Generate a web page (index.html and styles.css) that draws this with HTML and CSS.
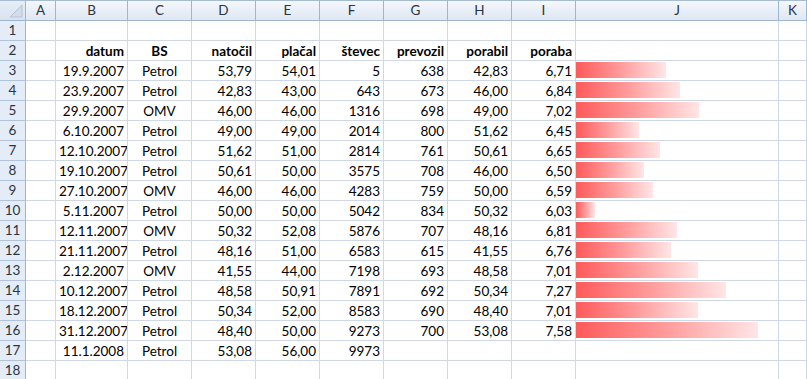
FILE: index.html
```html
<!DOCTYPE html>
<html>
<head>
<meta charset="utf-8">
<link rel="stylesheet" href="styles.css">
</head>
<body>
<div class="sheet">
  <div class="ch corner"><svg class="tri" width="14" height="14" viewBox="0 0 14 14"><polygon points="1,13 13,1 13,13" fill="#d3dde9" stroke="#b3c3d6" stroke-width="1"/></svg></div>
  <div class="ch">A</div><div class="ch">B</div><div class="ch">C</div><div class="ch">D</div><div class="ch">E</div><div class="ch">F</div><div class="ch">G</div><div class="ch">H</div><div class="ch">I</div><div class="ch">J</div><div class="ch">K</div>

  <div class="rh">1</div><div class="c"></div><div class="c"></div><div class="c"></div><div class="c"></div><div class="c"></div><div class="c"></div><div class="c"></div><div class="c"></div><div class="c"></div><div class="c"></div><div class="c"></div>

  <div class="rh">2</div><div class="c"></div><div class="c r b">datum</div><div class="c m b">BS</div><div class="c r b">natočil</div><div class="c r b">plačal</div><div class="c r b">števec</div><div class="c r b">prevozil</div><div class="c r b">porabil</div><div class="c r b">poraba</div><div class="c"></div><div class="c"></div>

  <div class="rh">3</div><div class="c"></div><div class="c r">19.9.2007</div><div class="c m">Petrol</div><div class="c r">53,79</div><div class="c r">54,01</div><div class="c r">5</div><div class="c r">638</div><div class="c r">42,83</div><div class="c r">6,71</div><div class="c bar"><span class="fill" style="width:90px"></span></div><div class="c"></div>

  <div class="rh">4</div><div class="c"></div><div class="c r">23.9.2007</div><div class="c m">Petrol</div><div class="c r">42,83</div><div class="c r">43,00</div><div class="c r">643</div><div class="c r">673</div><div class="c r">46,00</div><div class="c r">6,84</div><div class="c bar"><span class="fill" style="width:104px"></span></div><div class="c"></div>

  <div class="rh">5</div><div class="c"></div><div class="c r">29.9.2007</div><div class="c m">OMV</div><div class="c r">46,00</div><div class="c r">46,00</div><div class="c r">1316</div><div class="c r">698</div><div class="c r">49,00</div><div class="c r">7,02</div><div class="c bar"><span class="fill" style="width:123px"></span></div><div class="c"></div>

  <div class="rh">6</div><div class="c"></div><div class="c r">6.10.2007</div><div class="c m">Petrol</div><div class="c r">49,00</div><div class="c r">49,00</div><div class="c r">2014</div><div class="c r">800</div><div class="c r">51,62</div><div class="c r">6,45</div><div class="c bar"><span class="fill" style="width:63px"></span></div><div class="c"></div>

  <div class="rh">7</div><div class="c"></div><div class="c r">12.10.2007</div><div class="c m">Petrol</div><div class="c r">51,62</div><div class="c r">51,00</div><div class="c r">2814</div><div class="c r">761</div><div class="c r">50,61</div><div class="c r">6,65</div><div class="c bar"><span class="fill" style="width:84px"></span></div><div class="c"></div>

  <div class="rh">8</div><div class="c"></div><div class="c r">19.10.2007</div><div class="c m">Petrol</div><div class="c r">50,61</div><div class="c r">50,00</div><div class="c r">3575</div><div class="c r">708</div><div class="c r">46,00</div><div class="c r">6,50</div><div class="c bar"><span class="fill" style="width:68px"></span></div><div class="c"></div>

  <div class="rh">9</div><div class="c"></div><div class="c r">27.10.2007</div><div class="c m">OMV</div><div class="c r">46,00</div><div class="c r">46,00</div><div class="c r">4283</div><div class="c r">759</div><div class="c r">50,00</div><div class="c r">6,59</div><div class="c bar"><span class="fill" style="width:77px"></span></div><div class="c"></div>

  <div class="rh">10</div><div class="c"></div><div class="c r">5.11.2007</div><div class="c m">Petrol</div><div class="c r">50,00</div><div class="c r">50,00</div><div class="c r">5042</div><div class="c r">834</div><div class="c r">50,32</div><div class="c r">6,03</div><div class="c bar"><span class="fill" style="width:19px"></span></div><div class="c"></div>

  <div class="rh">11</div><div class="c"></div><div class="c r">12.11.2007</div><div class="c m">OMV</div><div class="c r">50,32</div><div class="c r">52,08</div><div class="c r">5876</div><div class="c r">707</div><div class="c r">48,16</div><div class="c r">6,81</div><div class="c bar"><span class="fill" style="width:101px"></span></div><div class="c"></div>

  <div class="rh">12</div><div class="c"></div><div class="c r">21.11.2007</div><div class="c m">Petrol</div><div class="c r">48,16</div><div class="c r">51,00</div><div class="c r">6583</div><div class="c r">615</div><div class="c r">41,55</div><div class="c r">6,76</div><div class="c bar"><span class="fill" style="width:95px"></span></div><div class="c"></div>

  <div class="rh">13</div><div class="c"></div><div class="c r">2.12.2007</div><div class="c m">OMV</div><div class="c r">41,55</div><div class="c r">44,00</div><div class="c r">7198</div><div class="c r">693</div><div class="c r">48,58</div><div class="c r">7,01</div><div class="c bar"><span class="fill" style="width:122px"></span></div><div class="c"></div>

  <div class="rh">14</div><div class="c"></div><div class="c r">10.12.2007</div><div class="c m">Petrol</div><div class="c r">48,58</div><div class="c r">50,91</div><div class="c r">7891</div><div class="c r">692</div><div class="c r">50,34</div><div class="c r">7,27</div><div class="c bar"><span class="fill" style="width:150px"></span></div><div class="c"></div>

  <div class="rh">15</div><div class="c"></div><div class="c r">18.12.2007</div><div class="c m">Petrol</div><div class="c r">50,34</div><div class="c r">52,00</div><div class="c r">8583</div><div class="c r">690</div><div class="c r">48,40</div><div class="c r">7,01</div><div class="c bar"><span class="fill" style="width:122px"></span></div><div class="c"></div>

  <div class="rh">16</div><div class="c"></div><div class="c r">31.12.2007</div><div class="c m">Petrol</div><div class="c r">48,40</div><div class="c r">50,00</div><div class="c r">9273</div><div class="c r">700</div><div class="c r">53,08</div><div class="c r">7,58</div><div class="c bar"><span class="fill" style="width:182px"></span></div><div class="c"></div>

  <div class="rh">17</div><div class="c"></div><div class="c r">11.1.2008</div><div class="c m">Petrol</div><div class="c r">53,08</div><div class="c r">56,00</div><div class="c r">9973</div><div class="c"></div><div class="c"></div><div class="c"></div><div class="c"></div><div class="c"></div>

  <div class="rh">18</div><div class="c"></div><div class="c"></div><div class="c"></div><div class="c"></div><div class="c"></div><div class="c"></div><div class="c"></div><div class="c"></div><div class="c"></div><div class="c"></div><div class="c"></div>
</div>
</body>
</html>
```
FILE: styles.css
```css
html, body {
  margin: 0;
  padding: 0;
  background: #ffffff;
}
body {
  font-family: Lato, "Noto Sans", sans-serif;
  font-size: 13.5px;
  color: #000;
  overflow: hidden;
}
.sheet {
  display: grid;
  grid-template-columns: 26px 30px 72px 64px 64px 64px 64px 64px 64px 64px 203px 1fr;
  grid-template-rows: 21px;
  grid-auto-rows: 20px;
  width: 807px;
}
.ch {
  box-sizing: border-box;
  border-top: 1px solid #a7bcd5;
  border-bottom: 1px solid #9eb6ce;
  border-right: 1px solid #9eb6ce;
  background: linear-gradient(to bottom, #f5f8fc 0%, #e9eff7 50%, #dfe7f1 100%);
  display: flex;
  align-items: center;
  justify-content: center;
  color: #2a3442;
  line-height: 19px;
}
.corner {
  background: linear-gradient(to bottom, #e6edf6, #d9e3ef);
  justify-content: flex-end;
  align-items: flex-end;
  padding: 0 2px 2px 0;
}
.tri { display: block; }
.rh {
  box-sizing: border-box;
  border-right: 1px solid #9eb6ce;
  border-bottom: 1px solid #b0c3da;
  background: #e4ecf7;
  color: #2a3442;
  display: flex;
  align-items: center;
  justify-content: center;
  line-height: 19px;
}
.c {
  box-sizing: border-box;
  border-right: 1px solid #d0d7e5;
  border-bottom: 1px solid #d0d7e5;
  padding: 1px 3px 0 3px;
  line-height: 19px;
  white-space: nowrap;
  overflow: hidden;
}
.r { text-align: right; }
.m { text-align: center; }
.b { font-weight: bold; }
.bar {
  padding: 1px 0 0 0;
}
.fill {
  display: block;
  height: 16px;
  background: linear-gradient(to right, #ff5a5a 0%, #ff9c9c 50%, #ffe6e6 100%);
}
```
